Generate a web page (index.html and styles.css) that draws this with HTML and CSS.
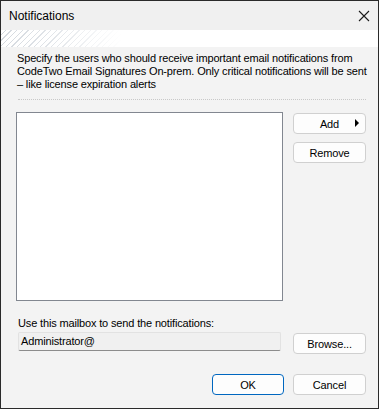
FILE: index.html
```html
<!DOCTYPE html>
<html>
<head>
<meta charset="utf-8">
<link rel="stylesheet" href="styles.css">
</head>
<body>
<div class="dialog">
  <div class="titlebar">
    <span class="title">Notifications</span>
    <svg class="close" width="12" height="12" viewBox="0 0 12 12"><path d="M1 1 L11 11 M11 1 L1 11" stroke="#1a1a1a" stroke-width="1.1" fill="none"/></svg>
  </div>
  <div class="banner"></div>
  <div class="content">
    <p class="desc">Specify the users who should receive important email notifications from<br>CodeTwo Email Signatures On-prem. Only critical notifications will be sent<br>– like license expiration alerts</p>
    <div class="sep"></div>
    <div class="mainrow">
      <div class="listbox"></div>
      <div class="sidebtns">
        <button class="btn add">Add<span class="arrow"></span></button>
        <button class="btn">Remove</button>
      </div>
    </div>
    <div class="label">Use this mailbox to send the notifications:</div>
    <div class="mailrow">
      <div class="textbox">Administrator@</div>
      <button class="btn">Browse...</button>
    </div>
    <div class="footer">
      <button class="btn primary">OK</button>
      <button class="btn">Cancel</button>
    </div>
  </div>
</div>
</body>
</html>
```

FILE: styles.css
```css
* { box-sizing: border-box; }
html, body { margin: 0; padding: 0; }
body {
  font-family: "Liberation Sans", Arial, sans-serif;
  font-size: 11px;
  color: #000;
  background: #f3f3f3;
}
.dialog {
  width: 379px;
  height: 409px;
  border: 1px solid #2a2a2a;
  background: #f3f3f3;
  display: flex;
  flex-direction: column;
}
.titlebar {
  height: 29px;
  background: #f0f0f0;
  display: flex;
  align-items: center;
  justify-content: space-between;
  padding: 0 8px 0 8px;
}
.title {
  font-size: 12px;
  color: #000;
  padding-top: 1px;
}
.banner {
  height: 17px;
  background:
    linear-gradient(to right, rgba(255,255,255,0) 0px, rgba(255,255,255,0.3) 50px, #fff 120px),
    repeating-linear-gradient(135deg, #fff 0px, #fff 3px, #d4d9df 3px, #d4d9df 4px);
}
.content {
  flex: 1;
  padding: 5px 12px 0 15px;
  display: flex;
  flex-direction: column;
  letter-spacing: -0.15px;
}
.desc {
  margin: 0 0 0 1px;
  line-height: 13px;
  white-space: nowrap;
}
.sep {
  margin-top: 8px;
  margin-left: 2px;
  height: 1px;
  border-top: 1px dotted #c8c8c8;
}
.mainrow {
  margin-top: 12px;
  display: flex;
  gap: 10px;
}
.listbox {
  width: 267px;
  height: 189px;
  background: #fff;
  border: 1px solid #828790;
}
.sidebtns {
  display: flex;
  flex-direction: column;
  gap: 8px;
  padding-top: 1px;
}
.btn {
  font-family: "Liberation Sans", Arial, sans-serif;
  font-size: 11px;
  letter-spacing: -0.15px;
  color: #000;
  width: 73px;
  height: 21px;
  background: #fdfdfd;
  border: 1px solid #d0d0d0;
  border-radius: 4px;
  padding: 0;
  position: relative;
}
.add .arrow {
  position: absolute;
  right: 6px;
  top: 5px;
  width: 0;
  height: 0;
  border-top: 4px solid transparent;
  border-bottom: 4px solid transparent;
  border-left: 4px solid #000;
}
.label {
  margin-top: 16px;
  margin-left: 2px;
  line-height: 13px;
}
.mailrow {
  margin-top: 2px;
  display: flex;
  gap: 12px;
  align-items: flex-start;
}
.textbox {
  margin-left: 2px;
  width: 264px;
  height: 19px;
  background: #f0f0f0;
  border: 1px solid #e2e2e2;
  border-bottom: 1px solid #8c8c8c;
  border-radius: 2px;
  padding: 2px 0 0 2px;
  line-height: 13px;
}
.mailrow .btn { margin-top: 1px; }
.footer {
  margin-top: 20px;
  display: flex;
  justify-content: flex-end;
  gap: 9px;
}
.footer .primary {
  width: 72px;
  border: 1px solid #0067c0;
}
```
